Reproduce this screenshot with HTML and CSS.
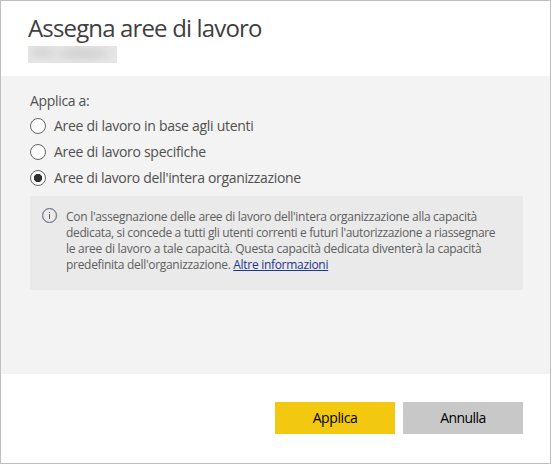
FILE: index.html
```html
<!DOCTYPE html>
<html lang="it">
<head>
<meta charset="utf-8">
<title>Assegna aree di lavoro</title>
<link rel="stylesheet" href="styles.css">
</head>
<body>
<main class="dialog">
  <header class="header">
    <h1 class="title"><span>Assegna aree di lavoro</span></h1>
    <div class="redacted"><i class="smudge smudge-a"></i><i class="smudge smudge-b"></i></div>
  </header>
  <section class="content">
    <div class="label"><span>Applica a:</span></div>
    <div class="option"><i class="radio"></i><span class="opt-a">Aree di lavoro in base agli utenti</span></div>
    <div class="option"><i class="radio"></i><span class="opt-b">Aree di lavoro specifiche</span></div>
    <div class="option"><i class="radio checked"></i><span class="opt-c">Aree di lavoro dell'intera organizzazione</span></div>
    <div class="info">
      <svg class="info-icon" width="16" height="16" viewBox="0 0 16 16" fill="none">
        <circle cx="7.2" cy="7.5" r="7" stroke="#d0905f" stroke-width=".8"/>
        <circle cx="7.8" cy="7.5" r="7" stroke="#5f8fd0" stroke-width=".8"/>
        <circle cx="7.5" cy="7.5" r="7" stroke="#74717a" stroke-width=".6"/>
        <path d="M7.5 6V11M7.5 4v1" stroke="#606060"/>
      </svg>
      <p class="info-text">
        <span class="line line-a">Con l'assegnazione delle aree di lavoro dell'intera organizzazione alla capacità</span>
        <span class="line line-b">dedicata, si concede a tutti gli utenti correnti e futuri l'autorizzazione a riassegnare</span>
        <span class="line line-c">le aree di lavoro a tale capacità. Questa capacità dedicata diventerà la capacità</span>
        <span class="line line-d">predefinita dell'organizzazione. <a class="link" href="#">Altre informazioni</a></span>
      </p>
    </div>
  </section>
  <footer class="footer">
    <button class="button primary">Applica</button>
    <button class="button">Annulla</button>
  </footer>
</main>
</body>
</html>
```
FILE: styles.css
```css
* { box-sizing: border-box; }
body { margin: 0; font-family: "Open Sans", "Noto Sans", sans-serif; color: #505050; }
.dialog { width: 551px; height: 464px; border: 1px solid #bebebe; background: #fff; display: flex; flex-direction: column; }
.header { height: 75px; padding: 10px 27px 0 27px; }
.title { margin: 0; height: 35px; font-size: 24px; line-height: 34px; font-weight: 400; letter-spacing: -0.85px; color: #404040; white-space: nowrap; }
.redacted { width: 89px; height: 17px; background: #e6e6e6; position: relative; overflow: hidden; }
.smudge { position: absolute; border-radius: 50%; background: #cdcdcd; filter: blur(4px); }
.smudge-a { left: 1px; top: 3px; width: 26px; height: 7px; }
.smudge-b { left: 30px; top: 3px; width: 50px; height: 9px; }
.content { height: 298px; padding: 15px 27px 0 29px; background: #f3f3f3; }
.label { height: 22px; font-size: 14px; line-height: 20px; letter-spacing: -0.32px; }
.option { height: 26px; display: flex; align-items: center; gap: 8px; font-size: 14px; line-height: 20px; letter-spacing: -0.28px; white-space: nowrap; }
.opt-c { letter-spacing: -0.33px; }
.radio { width: 16px; height: 16px; border: 1px solid #666; border-radius: 50%; background: #fff; }
.radio.checked { background: radial-gradient(circle, #303030 3.8px, #fff 4.5px); }
.info { height: 94px; margin-top: 5px; padding: 12px 0 0 12px; background: #eaeaea; display: flex; gap: 8px; }
.info-text { margin: 1px 0 0; font-size: 12px; line-height: 16px; letter-spacing: -0.3px; color: #606060; }
.line { display: block; white-space: nowrap; }
.line-a { letter-spacing: -0.28px; }
.line-b { letter-spacing: -0.35px; }
.line-c { letter-spacing: -0.27px; }
.link { color: #1d3594; text-decoration: underline; }
.footer { flex: 1; padding: 28px 27px 0; display: flex; justify-content: flex-end; gap: 8px; }
.button { width: 120px; height: 32px; border: 0; padding: 0; background: #c8c8c8; color: #000; font: 14px/32px "Open Sans", sans-serif; letter-spacing: -0.6px; }
.primary { background: #f2c811; letter-spacing: -0.4px; }
```
